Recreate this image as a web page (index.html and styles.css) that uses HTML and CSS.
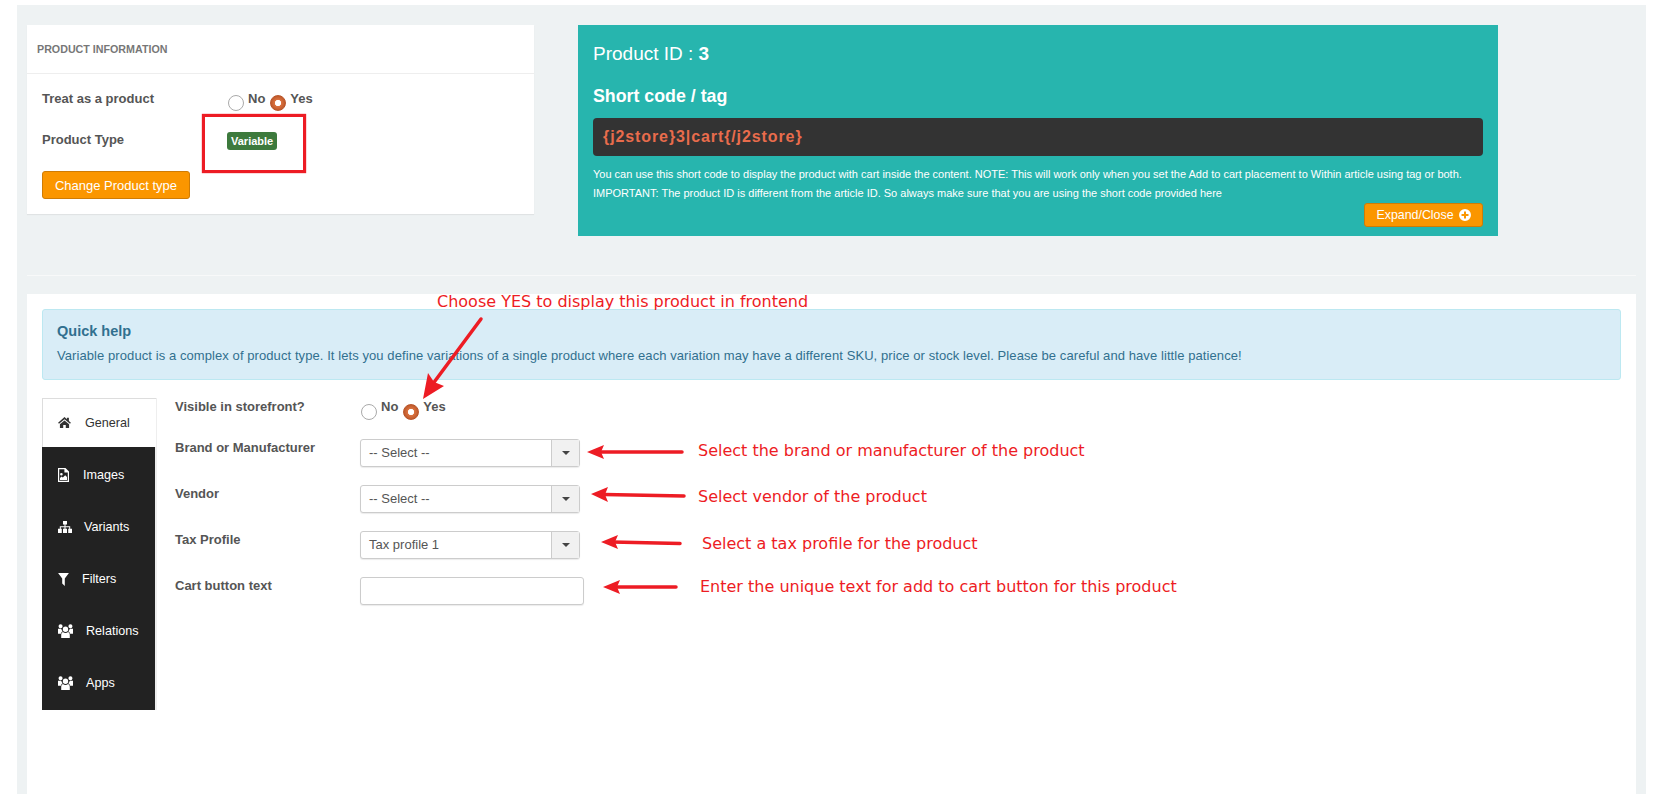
FILE: index.html
```html
<!DOCTYPE html>
<html lang="en">
<head>
    <meta charset="UTF-8">
    <title>Product Information</title>
    <link rel="stylesheet" href="styles.css">
</head>
<body>
    <div class="main">
        <div class="top-row">
            <!-- Product information card -->
            <div class="info-card">
                <div class="info-title">PRODUCT INFORMATION</div>
                <div class="info-body">
                    <div class="info-row">
                        <span class="info-label">Treat as a product</span>
                        <span class="radio-group">
                            <input class="radio" type="radio" name="treat">
                            <span class="radio-text">No</span>
                            <input class="radio" type="radio" name="treat" checked>
                            <span class="radio-text">Yes</span>
                        </span>
                    </div>
                    <div class="info-row">
                        <span class="info-label">Product Type</span>
                        <span class="badge">Variable</span>
                    </div>
                    <button class="btn btn-change" type="button">Change Product type</button>
                </div>
            </div>

            <!-- Short code box -->
            <div class="code-panel">
                <h3 class="code-id">Product ID : <b>3</b></h3>
                <h4 class="code-heading">Short code / tag</h4>
                <div class="code-box">{j2store}3|cart{/j2store}</div>
                <p class="code-note">You can use this short code to display the product with cart inside the content. NOTE: This will work only when you set the Add to cart placement to Within article using tag or both.</p>
                <p class="code-note">IMPORTANT: The product ID is different from the article ID. So always make sure that you are using the short code provided here</p>
                <div class="code-actions">
                    <button class="btn btn-expand" type="button">Expand/Close
                        <svg class="plus-icon" viewBox="0 0 24 24"><path fill-rule="evenodd" fill="#fff" d="M12 0a12 12 0 1 0 0 24a12 12 0 1 0 0-24zM10 5h4v5h5v4h-5v5h-4v-5H5v-4h5z"/></svg>
                    </button>
                </div>
            </div>
        </div>

        <hr class="divider">

        <div class="panel">
            <div class="alert">
                <h4 class="alert-title">Quick help</h4>
                <p class="alert-text">Variable product is a complex of product type. It lets you define variations of a single product where each variation may have a different SKU, price or stock level. Please be careful and have little patience!</p>
            </div>

            <div class="tab-layout">
                <ul class="tabs">
                    <li class="tab tab-active">
                        <svg class="icon icon-home" viewBox="0 0 14 12"><path fill="currentColor" d="M7 0L0 6.2l1 1.2L7 2.4l6 5 1-1.2-2.2-1.9V0.8H9.6v1.7zM2 8v4h3.6V8.8h2.8V12H12V8L7 3.8z"/></svg>
                        General
                    </li>
                    <li class="tab">
                        <svg class="icon icon-file" viewBox="0 0 11 14"><path fill="#fff" fill-rule="evenodd" d="M0 0h7.5L11 3.5V14H0zM1.2 1.2v11.6h8.6V4.6H6.4V1.2zM2 12V10l1.6-1.6 1.2 1.2 2.4-2.4L9 9v3zM3.4 5a1.3 1.3 0 1 1 0 2.6a1.3 1.3 0 1 1 0-2.6z"/></svg>
                        Images
                    </li>
                    <li class="tab">
                        <svg class="icon icon-sitemap" viewBox="0 0 14 12"><path fill="#fff" d="M5 0h4v3.4H7.5v1.8h4.7v2.6H14V12h-3.8V7.8h1V6.2H7.5v1.6H9V12H5V7.8h1.5V6.2H2.8v1.6h1V12H0V7.8h1.8V5.2h4.7V3.4H5z"/></svg>
                        Variants
                    </li>
                    <li class="tab">
                        <svg class="icon icon-filter" viewBox="0 0 10 12"><path fill="#fff" d="M0 0h10L6.2 5v7L3.8 9.8V5z"/></svg>
                        Filters
                    </li>
                    <li class="tab">
                        <svg class="icon icon-users" viewBox="0 0 14 13"><path fill="#fff" d="M7 2.4a2.5 2.5 0 1 1 0 5a2.5 2.5 0 1 1 0-5zM2.4 0.2a1.9 1.9 0 1 1 0 3.8a1.9 1.9 0 1 1 0-3.8zM11.6 0.2a1.9 1.9 0 1 1 0 3.8a1.9 1.9 0 1 1 0-3.8zM0 4.4h3c0.3 1 0.8 1.8 1.4 2.4-1 0.4-1.5 1.3-1.7 2.2H0zM14 4.4h-3c-0.3 1-0.8 1.8-1.4 2.4 1 0.4 1.5 1.3 1.7 2.2H14zM4.6 7.4C5.2 8 6.2 8.3 7 8.3s1.8-0.3 2.4-0.9c1 0.4 1.6 1.4 1.6 2.8V13H3v-2.8c0-1.4 0.6-2.4 1.6-2.8z"/></svg>
                        Relations
                    </li>
                    <li class="tab">
                        <svg class="icon icon-users" viewBox="0 0 14 13"><path fill="#fff" d="M7 2.4a2.5 2.5 0 1 1 0 5a2.5 2.5 0 1 1 0-5zM2.4 0.2a1.9 1.9 0 1 1 0 3.8a1.9 1.9 0 1 1 0-3.8zM11.6 0.2a1.9 1.9 0 1 1 0 3.8a1.9 1.9 0 1 1 0-3.8zM0 4.4h3c0.3 1 0.8 1.8 1.4 2.4-1 0.4-1.5 1.3-1.7 2.2H0zM14 4.4h-3c-0.3 1-0.8 1.8-1.4 2.4 1 0.4 1.5 1.3 1.7 2.2H14zM4.6 7.4C5.2 8 6.2 8.3 7 8.3s1.8-0.3 2.4-0.9c1 0.4 1.6 1.4 1.6 2.8V13H3v-2.8c0-1.4 0.6-2.4 1.6-2.8z"/></svg>
                        Apps
                    </li>
                </ul>

                <div class="form">
                    <div class="form-row form-row-radio">
                        <span class="form-label">Visible in storefront?</span>
                        <span class="radio-group">
                            <input class="radio" type="radio" name="visible">
                            <span class="radio-text">No</span>
                            <input class="radio" type="radio" name="visible" checked>
                            <span class="radio-text">Yes</span>
                        </span>
                    </div>
                    <div class="form-row">
                        <span class="form-label">Brand or Manufacturer</span>
                        <div class="select"><span class="select-value">-- Select --</span><span class="select-toggle"><i class="caret"></i></span></div>
                    </div>
                    <div class="form-row">
                        <span class="form-label">Vendor</span>
                        <div class="select"><span class="select-value">-- Select --</span><span class="select-toggle"><i class="caret"></i></span></div>
                    </div>
                    <div class="form-row">
                        <span class="form-label">Tax Profile</span>
                        <div class="select"><span class="select-value">Tax profile 1</span><span class="select-toggle"><i class="caret"></i></span></div>
                    </div>
                    <div class="form-row">
                        <span class="form-label">Cart button text</span>
                        <input class="text-input" type="text">
                    </div>
                </div>
            </div>
        </div>
    </div>

    <!-- Red annotations drawn over the screenshot -->
    <div class="red-box"></div>
    <svg class="arrows" viewBox="0 0 1661 794">
        <g fill="#ed1c24" stroke="#ed1c24">
            <path fill="none" stroke-width="3.5" stroke-linecap="round" d="M481 319L432 385"/>
            <path stroke="none" d="M423 399L428 373 434 382 444 386z"/>
            <path fill="none" stroke-width="3.5" stroke-linecap="round" d="M682 452H600"/>
            <path stroke="none" d="M587 452L604 445 601 452 604 459z"/>
            <path fill="none" stroke-width="3.5" stroke-linecap="round" d="M684 496L604 494.5"/>
            <path stroke="none" d="M591 494L608 487 605 494.5 608 502z"/>
            <path fill="none" stroke-width="3.5" stroke-linecap="round" d="M680 543.5L612 542"/>
            <path stroke="none" d="M601 542L618 535 615 542 618 549z"/>
            <path fill="none" stroke-width="3.5" stroke-linecap="round" d="M676 587H615"/>
            <path stroke="none" d="M603 587L620 580 617 587 620 594z"/>
        </g>
    </svg>
    <span class="note note-choose">Choose YES to display this product in frontend</span>
    <span class="note note-brand">Select the brand or manufacturer of the product</span>
    <span class="note note-vendor">Select vendor of the product</span>
    <span class="note note-tax">Select a tax profile for the product</span>
    <span class="note note-cart">Enter the unique text for add to cart button for this product</span>
</body>
</html>
```

FILE: styles.css
```css
/* Page */
html, body {
    height: 100%;
}

body {
    margin: 0;
    background-color: #fff;
    color: #555;
    font-family: "Liberation Sans", Arial, sans-serif;
    font-size: 13px;
    overflow: hidden;
    position: relative;
}

.main {
    display: flex;
    flex-direction: column;
    box-sizing: border-box;
    width: 1629px;
    height: 789px;
    margin: 5px 0 0 17px;
    padding: 20px 10px 0;
    background-color: #eef2f3;
}

.top-row {
    display: flex;
    align-items: flex-start;
    gap: 44px;
}

/* Product information card */
.info-card {
    box-sizing: border-box;
    width: 507px;
    height: 189px;
    background-color: #fff;
    box-shadow: 0 1px 1px rgba(0, 0, 0, 0.06);
}

.info-title {
    box-sizing: border-box;
    height: 49px;
    padding-left: 10px;
    border-bottom: 1px solid #eee;
    color: #777;
    font-size: 10.7px;
    font-weight: bold;
    line-height: 49px;
}

.info-body {
    padding: 12px 15px 0;
}

.info-row {
    display: flex;
    align-items: flex-start;
    height: 41px;
    line-height: 26px;
}

.info-label {
    width: 185px;
    font-weight: bold;
}

/* Radios */
.radio-group {
    display: flex;
    align-items: flex-start;
    padding-left: 1px;
    font-weight: bold;
    line-height: 18px;
}

.info-row .radio-group {
    padding-top: 4px;
}

.radio {
    appearance: none;
    box-sizing: border-box;
    width: 16px;
    height: 16px;
    margin: 5px 4px 0 0;
    border: 1px solid #aaa;
    border-radius: 50%;
    background-color: #fff;
}

.radio:checked {
    border: 1px solid #b9552a;
    background: radial-gradient(circle closest-side, #fff 0 40%, #d9713f 50%, #c05a2b 100%);
}

.radio-text {
    margin-right: 5px;
}

.badge {
    box-sizing: border-box;
    height: 18px;
    margin: 5px 0 0 0;
    padding: 0 4px;
    border-radius: 3px;
    background-color: #3d7a3d;
    color: #fff;
    font-size: 11px;
    font-weight: bold;
    line-height: 18px;
}

/* Buttons */
.btn {
    box-sizing: border-box;
    border: 1px solid #cf7c05;
    border-radius: 3px;
    background-color: #fb9600;
    color: #fff;
    font-family: inherit;
    font-size: 13px;
    padding: 0;
}

.btn-change {
    display: block;
    width: 148px;
    height: 28px;
    margin-top: 3px;
}

.btn-expand {
    display: flex;
    align-items: center;
    justify-content: center;
    gap: 5px;
    width: 119px;
    height: 24px;
    font-size: 12.4px;
}

.plus-icon {
    width: 12px;
    height: 12px;
}

/* Short code box */
.code-panel {
    box-sizing: border-box;
    width: 920px;
    height: 211px;
    padding: 0 15px;
    background-color: #27b5ae;
    color: #fff;
}

.code-id {
    margin: 0;
    padding-top: 17px;
    font-size: 19px;
    font-weight: normal;
    line-height: 24px;
}

.code-heading {
    margin: 0;
    padding-top: 20px;
    font-size: 17.8px;
    font-weight: bold;
    line-height: 20px;
}

.code-box {
    box-sizing: border-box;
    height: 38px;
    margin-top: 12px;
    padding-left: 10px;
    border-radius: 4px;
    background-color: #333;
    color: #e96c4c;
    font-size: 16px;
    font-weight: bold;
    letter-spacing: 0.9px;
    line-height: 38px;
}

.code-note {
    margin: 0;
    font-size: 11px;
    line-height: 19px;
}

.code-box + .code-note {
    margin-top: 9px;
}

.code-actions {
    display: flex;
    justify-content: flex-end;
}

/* Divider */
.divider {
    flex: none;
    width: 100%;
    height: 1px;
    margin: 39px 0 18px;
    border: 0;
    background-color: #f8f9f9;
}

/* Lower panel */
.panel {
    flex: 1;
    padding: 15px 15px 0;
    background-color: #fff;
}

.alert {
    box-sizing: border-box;
    height: 71px;
    padding: 12px 14px 0;
    border: 1px solid #bce8f1;
    border-radius: 3px;
    background-color: #d9edf7;
    color: #31708f;
}

.alert-title {
    margin: 0;
    font-size: 14.5px;
    font-weight: bold;
    line-height: 18px;
}

.alert-text {
    margin: 7px 0 0;
    font-size: 13px;
    letter-spacing: 0.08px;
    line-height: 18px;
}

.tab-layout {
    display: flex;
    align-items: flex-start;
    gap: 18px;
    margin-top: 18px;
}

/* Tabs */
.tabs {
    width: 113px;
    margin: 0;
    padding: 0 0 1px;
    border-right: 2px solid #eee;
    background-color: #222;
    list-style: none;
}

.tab {
    display: flex;
    align-items: center;
    gap: 12px;
    box-sizing: border-box;
    height: 52px;
    padding-left: 16px;
    color: #fff;
    font-size: 12.6px;
}

.tab-active {
    height: 49px;
    margin-right: -1px;
    padding-left: 15px;
    padding-bottom: 1px;
    border-top: 1px solid #ddd;
    border-left: 1px solid #ddd;
    background-color: #fff;
    color: #333;
}

.tab:nth-child(2) {
    height: 54px;
    padding-top: 2px;
}

.icon {
    flex: none;
    height: 12px;
    width: 14px;
}

.icon-home {
    width: 13px;
    height: 11px;
    margin-right: 2px;
}

.icon-file {
    height: 14px;
    width: 11px;
    margin-right: 2px;
}

.icon-sitemap {
    width: 14px;
}

.icon-filter {
    width: 11px;
    height: 13px;
    margin-right: 1px;
}

.icon-users {
    width: 15px;
    height: 14px;
    margin-right: 1px;
}

/* Form */
.form-row {
    display: flex;
    align-items: flex-start;
    height: 28px;
    margin-bottom: 18px;
}

.form-row-radio {
    height: 41px;
    margin-bottom: 0;
}

.form-label {
    width: 185px;
    font-weight: bold;
    line-height: 18px;
}

.form-row .radio {
    margin-top: 6px;
}

.select {
    display: flex;
    box-sizing: border-box;
    width: 220px;
    height: 28px;
    border: 1px solid #ccc;
    border-radius: 3px;
    background-color: #fff;
    box-shadow: 0 1px 1px rgba(0, 0, 0, 0.08);
}

.select-value {
    flex: 1;
    padding-left: 8px;
    line-height: 26px;
}

.select-toggle {
    display: flex;
    align-items: center;
    justify-content: center;
    width: 27px;
    border-left: 1px solid #ccc;
    background-color: #f1f1f1;
}

.caret {
    width: 0;
    height: 0;
    border-top: 4px solid #444;
    border-right: 4px solid transparent;
    border-left: 4px solid transparent;
}

.text-input {
    box-sizing: border-box;
    width: 224px;
    height: 28px;
    margin: 0;
    border: 1px solid #ccc;
    border-radius: 3px;
    background-color: #fff;
    box-shadow: 0 1px 1px rgba(0, 0, 0, 0.08);
}

/* Annotations */
.red-box {
    position: absolute;
    left: 202px;
    top: 114px;
    width: 104px;
    height: 59px;
    box-sizing: border-box;
    border: 3px solid #ed1c24;
    box-shadow: 0 0 1px #ed1c24;
}

.arrows {
    position: absolute;
    left: 0;
    top: 0;
    width: 1661px;
    height: 794px;
    pointer-events: none;
}

.note {
    position: absolute;
    color: #ed1c24;
    font-family: "DejaVu Sans", sans-serif;
    font-size: 16px;
    line-height: 20px;
    white-space: nowrap;
}

.note-choose {
    left: 437px;
    top: 292px;
}

.note-brand {
    left: 698px;
    top: 441px;
}

.note-vendor {
    left: 698px;
    top: 487px;
}

.note-tax {
    left: 702px;
    top: 534px;
}

.note-cart {
    left: 700px;
    top: 577px;
}
```
